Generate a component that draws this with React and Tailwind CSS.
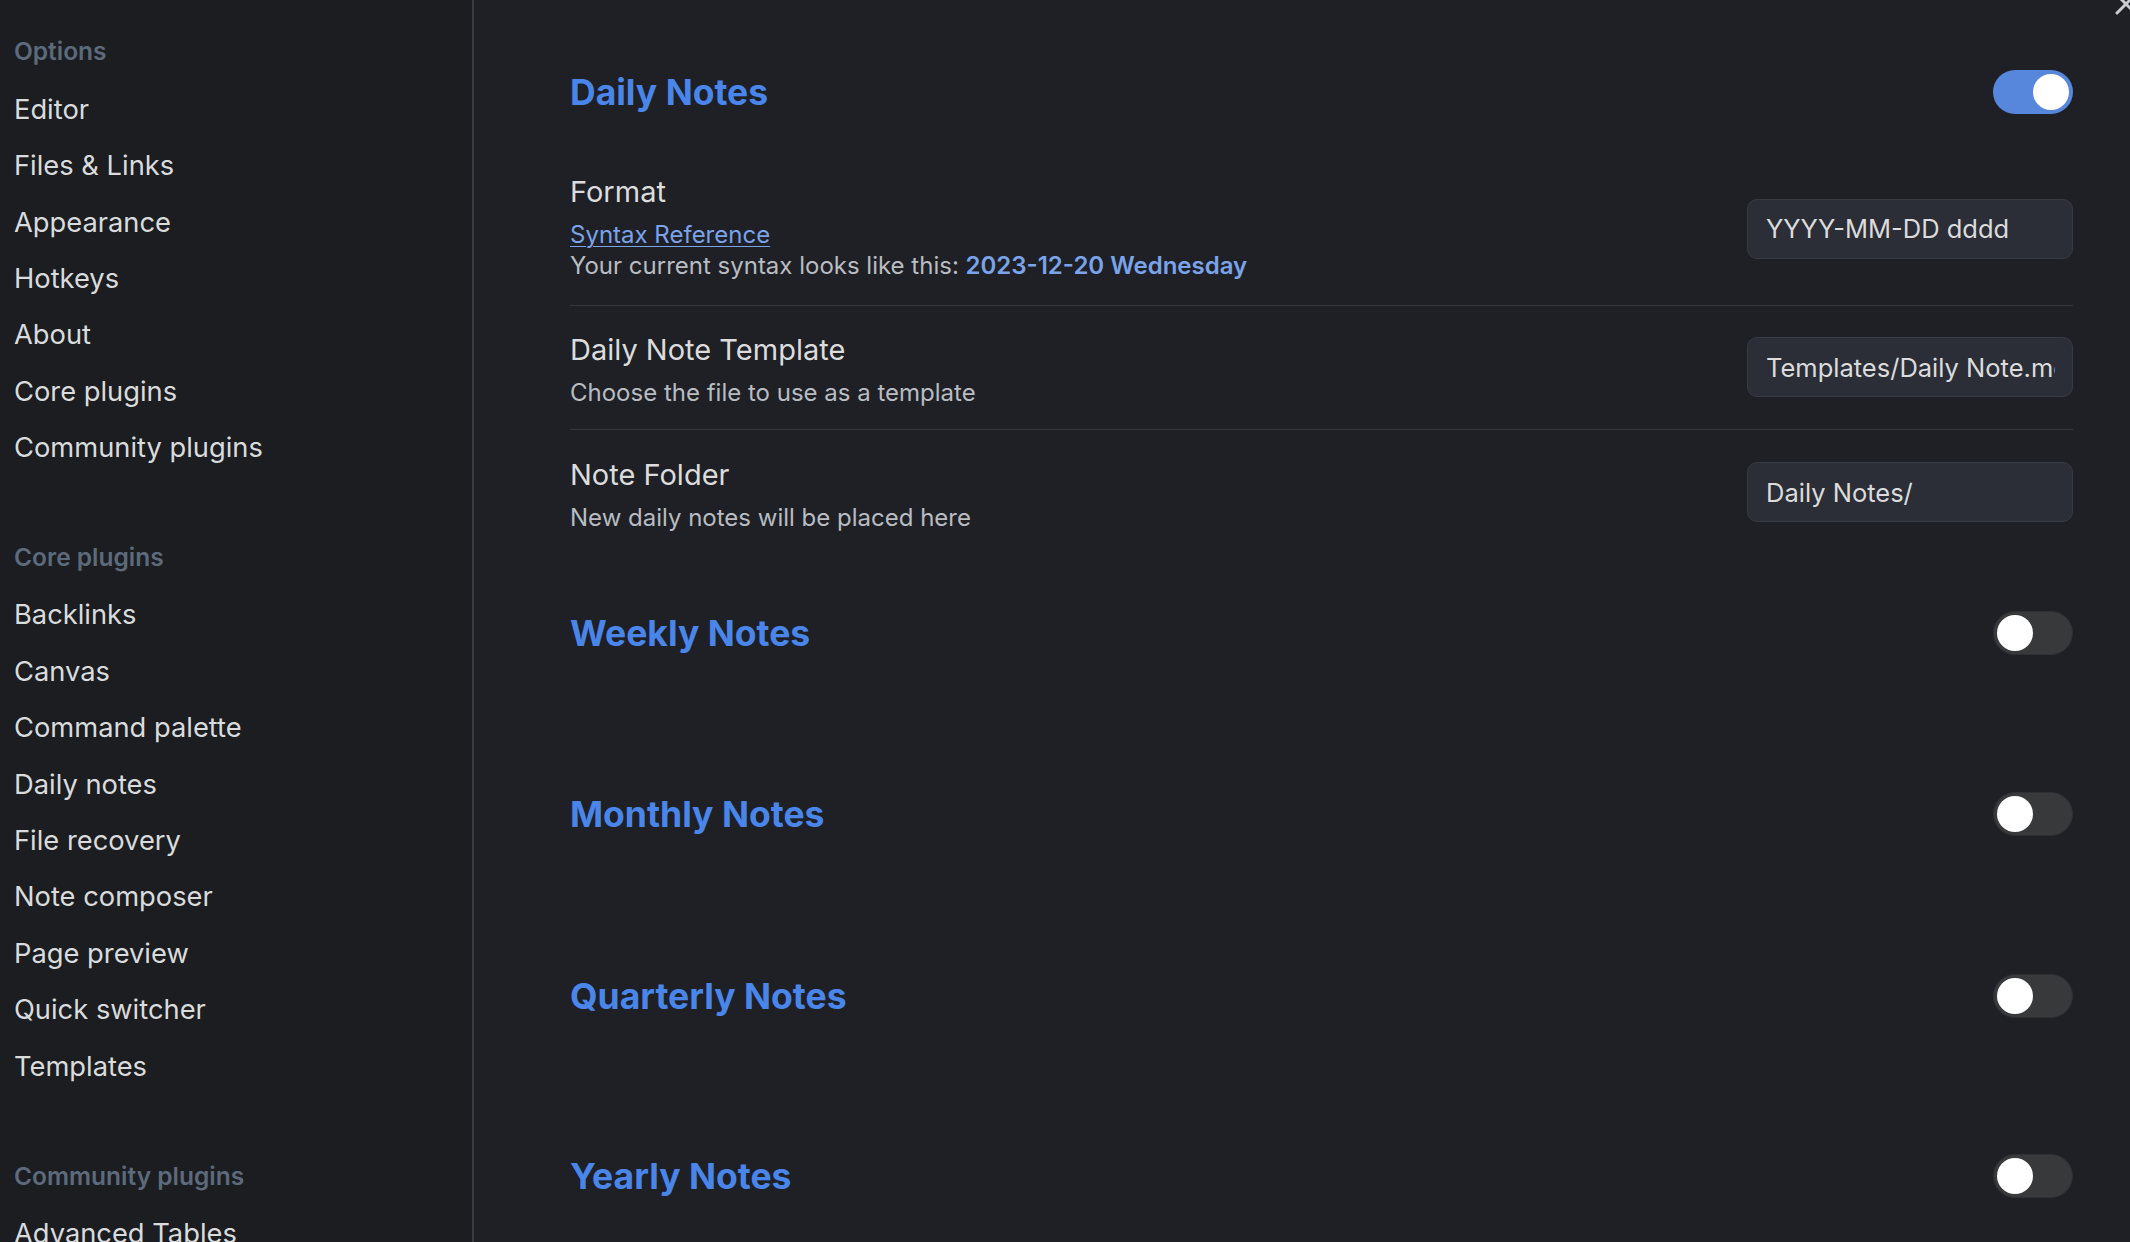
import React from "react";

const optionItems = ["Editor", "Files & Links", "Appearance", "Hotkeys", "About", "Core plugins", "Community plugins"];
const coreItems = ["Backlinks", "Canvas", "Command palette", "Daily notes", "File recovery", "Note composer", "Page preview", "Quick switcher", "Templates"];
const communityItems = ["Advanced Tables", "Calendar", "Dataview"];

function SideHeader({ children, className = "" }) {
  return (
    <div className={"h-[32px] flex items-center text-[24.5px] font-semibold text-[#5d6a7b] " + className}>{children}</div>
  );
}

function SideItem({ children }) {
  return <div className="h-[56.4px] flex items-center text-[27.3px] text-[#dadbdc] whitespace-nowrap">{children}</div>;
}

function Toggle({ on }) {
  return on ? (
    <div className="w-[80px] h-[44px] rounded-full bg-[#5787dc] flex items-center justify-end px-[4px] shrink-0">
      <div className="w-[36px] h-[36px] rounded-full bg-white" />
    </div>
  ) : (
    <div className="w-[80px] h-[44px] rounded-full bg-[#38393b] border border-[#2e3033] flex items-center justify-start px-[3px] shrink-0">
      <div className="w-[36px] h-[36px] rounded-full bg-white" />
    </div>
  );
}

function SectionHeader({ title, on, className = "" }) {
  return (
    <div className={"h-[44px] flex items-center justify-between " + className}>
      <div className="text-[35.5px] font-bold text-[#4a86ea] pt-[2px]">{title}</div>
      <Toggle on={on} />
    </div>
  );
}

function TextInput({ value, className = "" }) {
  return (
    <input
      readOnly
      value={value}
      className={"w-[326px] h-[60px] shrink-0 rounded-[10px] bg-[#2b2e37] border border-[#373b44] pl-[18px] pr-[17px] text-[25.5px] text-[#dcdcdc] outline-none " + className}
      style={{ fontFamily: "Inter, sans-serif" }}
    />
  );
}

function Row({ label, children, value, border, className = "", inputClass = "" }) {
  return (
    <div className={"flex items-center justify-between " + (border ? "border-b border-[#33363c] " : "") + className}>
      <div className="flex flex-col">
        <div className="h-[32px] flex items-center text-[29px] text-[#dcdcdc]">{label}</div>
        <div className="mt-[11px] flex flex-col text-[24px] leading-[31px] text-[#b9bcc1]">{children}</div>
      </div>
      <TextInput value={value} className={inputClass} />
    </div>
  );
}

export default function App() {
  return (
    <div className="relative flex h-[1242px] w-full overflow-hidden bg-[#1e2026]" style={{ fontFamily: "Inter, 'Noto Sans', sans-serif" }}>
      <aside className="w-[474px] shrink-0 h-full bg-[#1b1d21] border-r-2 border-[#383b42] pl-[14px] pt-[35px]">
        <SideHeader className="mb-[15px]">Options</SideHeader>
        {optionItems.map((t) => (
          <SideItem key={t}>{t}</SideItem>
        ))}
        <SideHeader className="mt-[65px] mb-[14px]">Core plugins</SideHeader>
        {coreItems.map((t) => (
          <SideItem key={t}>{t}</SideItem>
        ))}
        <SideHeader className="mt-[65px] mb-[14px]">Community plugins</SideHeader>
        {communityItems.map((t) => (
          <SideItem key={t}>{t}</SideItem>
        ))}
      </aside>

      <main className="flex-1 h-full pl-[96px] pr-[57px] pt-[70px]">
        <SectionHeader title="Daily Notes" on />
        <div className="mt-[36px]">
          <Row label="Format" value="YYYY-MM-DD dddd" border className="pt-[26px] pb-[24px]">
            <a className="text-[#7aa3ea] underline underline-offset-[3px] decoration-1 w-fit">Syntax Reference</a>
            <span>
              Your current syntax looks like this: <span className="font-semibold text-[#7aa3ea]">2023-12-20 Wednesday</span>
            </span>
          </Row>
          <Row label="Daily Note Template" value="Templates/Daily Note.md" border className="pt-[28px] pb-[21px]" inputClass="mt-[-8px]">
            <span>Choose the file to use as a template</span>
          </Row>
          <Row label="Note Folder" value="Daily Notes/" className="pt-[29px] pb-[20px]" inputClass="mt-[-8px]">
            <span>New daily notes will be placed here</span>
          </Row>
        </div>
        <SectionHeader title="Weekly Notes" className="mt-[58px]" />
        <SectionHeader title="Monthly Notes" className="mt-[137px]" />
        <SectionHeader title="Quarterly Notes" className="mt-[138px]" />
        <SectionHeader title="Yearly Notes" className="mt-[136px]" />
      </main>

      <svg className="absolute right-[-9px] top-[-9px]" width="26" height="26" viewBox="0 0 26 26">
        <path d="M4 4 L22 22 M22 4 L4 22" stroke="#c9ccd2" strokeWidth="3" strokeLinecap="round" />
      </svg>
    </div>
  );
}
